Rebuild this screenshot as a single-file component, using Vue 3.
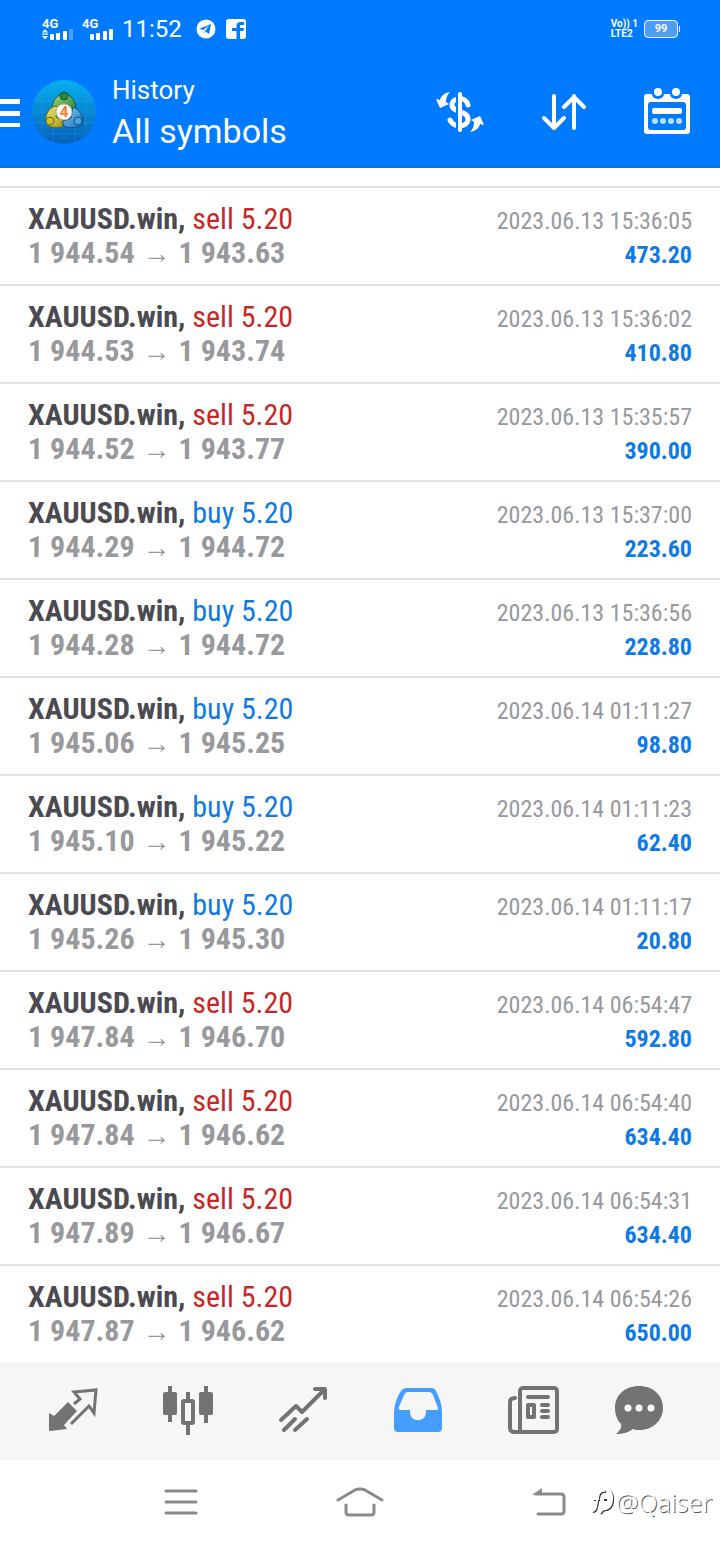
<script setup>
const deals = [
  ['sell', '1 944.54', '1 943.63', '2023.06.13 15:36:05', '473.20'],
  ['sell', '1 944.53', '1 943.74', '2023.06.13 15:36:02', '410.80'],
  ['sell', '1 944.52', '1 943.77', '2023.06.13 15:35:57', '390.00'],
  ['buy', '1 944.29', '1 944.72', '2023.06.13 15:37:00', '223.60'],
  ['buy', '1 944.28', '1 944.72', '2023.06.13 15:36:56', '228.80'],
  ['buy', '1 945.06', '1 945.25', '2023.06.14 01:11:27', '98.80'],
  ['buy', '1 945.10', '1 945.22', '2023.06.14 01:11:23', '62.40'],
  ['buy', '1 945.26', '1 945.30', '2023.06.14 01:11:17', '20.80'],
  ['sell', '1 947.84', '1 946.70', '2023.06.14 06:54:47', '592.80'],
  ['sell', '1 947.84', '1 946.62', '2023.06.14 06:54:40', '634.40'],
  ['sell', '1 947.89', '1 946.67', '2023.06.14 06:54:31', '634.40'],
  ['sell', '1 947.87', '1 946.62', '2023.06.14 06:54:26', '650.00'],
].map(([side, open, close, time, profit]) => ({ side, open, close, time, profit }))
</script>

<template>
  <div class="screen">
    <header class="top">
      <div class="status">
        <div class="signal">
          <span class="net">4G</span>
          <svg width="32" height="12" viewBox="0 0 32 12" fill="#fff">
            <path d="M0 4.500 3 1l3 3.500zM0 8l3 3.500L6 8zM0 5.500h6v1.200H0z" />
            <rect x="8" y="6" width="4" height="6" rx="1" /><rect x="14" y="5" width="4" height="7" rx="1" />
            <rect x="21" y="3" width="4" height="9" rx="1" /><rect x="27" y="1" width="4" height="11" rx="1" opacity=".3" />
          </svg>
        </div>
        <div class="signal">
          <span class="net">4G</span>
          <svg width="32" height="12" viewBox="0 0 32 12" fill="#fff">
            <rect x="8" y="6" width="4" height="6" rx="1" /><rect x="14" y="5" width="4" height="7" rx="1" />
            <rect x="21" y="3" width="4" height="9" rx="1" /><rect x="27" y="1" width="4" height="11" rx="1" />
          </svg>
        </div>
        <span class="clock">11:52</span>
        <svg class="tg" width="20" height="20" viewBox="0 0 20 20">
          <circle cx="10" cy="10" r="9.500" fill="#fff" />
          <path d="M3.500 9.800 15 5l-2 10-3.500-2.500-1.800 1.800-.6-3.200z" fill="#007aff" />
          <path d="m7.100 11 6-4.500-4 5.500-1.400 2z" fill="#fff" />
        </svg>
        <svg width="20" height="20" viewBox="0 0 20 20">
          <rect width="20" height="20" rx="3" fill="#fff" />
          <path d="M10.500 20v-8H6V9h4.500V7c0-2.600 1.500-4 4-4H18v3h-2.500C14.300 6 14 6.500 14 7.400V9h4l-.5 3H14v8z" fill="#007aff" />
        </svg>
        <div class="lte"><span>Vo)) 1</span><span>LTE2</span></div>
        <div class="battery">99</div>
      </div>
      <div class="toolbar">
        <button class="menu" aria-label="Menu">
          <svg width="20" height="30" viewBox="0 0 20 30" fill="#fff"><path d="M0 2h20v5H0zM0 14h20v5H0zM0 26h20v4H0z" /></svg>
        </button>
        <svg class="logo" width="64" height="64" viewBox="0 0 64 64">
          <defs>
            <linearGradient id="sky" x1="0" y1="0" x2="0" y2="1"><stop offset="0" stop-color="#08aef0" /><stop offset="1" stop-color="#0660b8" /></linearGradient>
            <linearGradient id="green" x1="0" y1="0" x2="1" y2="1"><stop offset="0" stop-color="#a8d878" /><stop offset="1" stop-color="#187c38" /></linearGradient>
            <linearGradient id="gold" x1="0" y1="0" x2="1" y2="1"><stop offset="0" stop-color="#f2e87c" /><stop offset="1" stop-color="#a79616" /></linearGradient>
            <linearGradient id="blue" x1="0" y1="0" x2="1" y2="1"><stop offset="0" stop-color="#8cd2f8" /><stop offset="1" stop-color="#126cb8" /></linearGradient>
          </defs>
          <circle cx="32" cy="32" r="32" fill="url(#sky)" />
          <path d="M10 10v44M21 2v60M43 2v60M54 10v44M2 21h60M0 32h64M2 43h60M10 54h44" stroke="#4cc4ff" stroke-width="1" opacity=".2" />
          <path d="M32 14c7 0 12 7 12 15l-5 4-7-8-7 8-5-4c0-8 5-15 12-15z" fill="url(#green)" stroke="#125c35" />
          <path d="M23 26c-6 2-10 9-9 15 0 6 7 7 16 6l2-6-8-4 2-10z" fill="url(#gold)" stroke="#6e6a18" />
          <path d="M41 27c7 3 10 9 10 14 0 6-9 8-18 6l-3-5 9-4z" fill="url(#blue)" stroke="#154d86" />
          <circle cx="32" cy="16" r="4" fill="#238846" stroke="#125c35" />
          <circle cx="18" cy="41" r="4" fill="#d0bd32" stroke="#6e6a18" />
          <circle cx="46" cy="41" r="4" fill="#48a3de" stroke="#154d86" />
          <circle cx="32" cy="32" r="8" fill="#fffaf4" stroke="#b5b1a6" />
          <text x="32" y="37" text-anchor="middle" class="four">4</text>
        </svg>
        <div class="titles">
          <span class="small">History</span>
          <h1>All symbols</h1>
        </div>
        <button aria-label="Currency">
          <svg width="48" height="42" viewBox="0 0 48 42" fill="none" stroke="#fff">
            <path d="M32 14C30 5 16 6 16 14s16 5 16 14-15 9-18 1" stroke-width="5" stroke-linecap="round" />
            <path d="M21 3v36" stroke="#007aff" stroke-width="2" />
            <path d="M24 3v36" stroke-width="4" stroke-linecap="round" />
            <path d="M14 1C8 2 5 5 4 9L0 8l4 9 9-4-3-2c0-4 1-7 4-10zM34 41c6-1 9-4 10-8l4 1-4-9-9 4 3 2c0 4-1 7-4 10z" fill="#fff" stroke="none" />
          </svg>
        </button>
        <button aria-label="Sort">
          <svg width="44" height="36" viewBox="0 0 44 36" fill="none" stroke="#fff" stroke-width="4" stroke-linecap="round" stroke-linejoin="round"><path d="M12 2v32M2 24l10 10 10-10M32 34V2M22 13 32 3l10 10" /></svg>
        </button>
        <button aria-label="Choose period">
          <svg width="46" height="48" viewBox="0 0 46 48">
            <rect y="6" width="46" height="40" rx="3" fill="#fff" />
            <rect x="4" y="14" width="38" height="28" rx="3" fill="#007aff" />
            <path d="M8 6h12a6 5 0 0 1-12 0zM26 6h12a6 5 0 0 1-12 0z" fill="#007aff" />
            <circle cx="14" cy="4" r="4" fill="#fff" /><circle cx="32" cy="4" r="4" fill="#fff" />
            <rect x="8" y="20" width="30" height="6" rx="2" fill="#fff" />
            <g fill="#b8deff"><circle cx="11" cy="33" r="3" /><circle cx="19" cy="33" r="3" /><circle cx="27" cy="33" r="3" /><circle cx="35" cy="33" r="3" /></g>
          </svg>
        </button>
      </div>
    </header>

    <main>
      <ul class="deals">
        <li v-for="d in deals" :key="d.time">
          <div class="line">
            <span class="deal"><b>XAUUSD.win,</b> <span :class="d.side">{{ d.side }} 5.20</span></span>
            <time>{{ d.time }}</time>
          </div>
          <div class="line">
            <span class="prices">{{ d.open }}<span class="arrow">→</span>{{ d.close }}</span>
            <span class="profit">{{ d.profit }}</span>
          </div>
        </li>
      </ul>
    </main>

    <nav class="tabs">
      <button aria-label="Quotes">
        <svg width="52" height="52" viewBox="0 0 52 52">
          <path d="m2 28 5 3 14-14 9 9-13 14 3 4-17 2q-1 0-1-1z" fill="#737373" />
          <path d="m27 19 6-5-6-7 22-2-2 23-5-7-18 18" fill="none" stroke="#737373" stroke-width="3" />
        </svg>
      </button>
      <button aria-label="Charts">
        <svg width="52" height="52" viewBox="0 0 52 52" fill="#737373">
          <path d="M6 1h4v36H6zM42 1h4v37h-4zM24 7h4v43h-4z" /><rect x="1" y="7" width="14" height="23" rx="2" /><rect x="37" y="7" width="14" height="23" rx="2" />
          <rect x="21" y="16" width="10" height="22" rx="1" fill="#f6f6f6" stroke="#737373" stroke-width="4" />
        </svg>
      </button>
      <button aria-label="Trade">
        <svg width="52" height="52" viewBox="0 0 52 52" fill="none" stroke="#737373" stroke-width="4" stroke-linecap="round" stroke-linejoin="round"><path d="m4 35 15-14 6 6L47 5M38 4h10v9M7 45l11-11M18 45l12-11" /></svg>
      </button>
      <button aria-label="History">
        <svg width="52" height="52" viewBox="0 -1 52 52">
          <path d="M15 2h24c3 0 4 1 5 3 4 8 6 14 6 22v15c0 2-1 4-4 4H6c-3 0-4-2-4-4V27C2 19 5 11 9 5c2-2 3-3 6-3z" fill="#459eff" />
          <path d="M16 6h21c2 0 3 1 4 3l5 13c0 1 0 2-2 2H34v2c0 11-16 11-16 0v-2H9c-2 0-3-1-2-3l5-12c1-2 2-3 4-3z" fill="#f6f6f6" />
        </svg>
      </button>
      <button aria-label="News">
        <svg width="52" height="52" viewBox="0 0 52 52" fill="none" stroke="#737373" stroke-width="4" stroke-linejoin="round">
          <rect x="13" y="3" width="37" height="44" rx="3" /><path d="M8 13c-3 0-5 1-5 4v26c0 3 2 4 5 4h8" stroke-linecap="round" />
          <path d="M21 12h20M35 20h6M35 26h6M35 32h6" stroke-linecap="round" /><rect x="21" y="20" width="6" height="12" />
        </svg>
      </button>
      <button aria-label="Messages">
        <svg width="50" height="52" viewBox="1 1 50 52">
          <path d="M27 2c14 0 24 9 24 22S40 46 28 46c-3 0-5 0-7-1-4 3-10 5-17 5 4-3 6-7 5-10C5 36 3 30 3 24 3 11 13 2 27 2z" fill="#737373" />
          <g fill="#fff"><circle cx="16" cy="24" r="3.500" /><circle cx="27" cy="24" r="3.500" /><circle cx="39" cy="24" r="3.500" /></g>
        </svg>
      </button>
    </nav>

    <footer class="system">
      <button aria-label="Recent apps"><svg width="34" height="26" viewBox="0 0 34 26" stroke="#8a8a8a" stroke-width="3" stroke-linecap="round"><path d="M2 2h30M2 13h30M2 24h30" /></svg></button>
      <button class="home" aria-label="Home"><svg width="48" height="30" viewBox="0 0 48 30" fill="none" stroke="#8a8a8a" stroke-width="3" stroke-linecap="round"><path d="m2 13 17-10q5-2 10 0l17 10M10 18v7q0 3 3 3h22q3 0 3-3v-7" /></svg></button>
      <button aria-label="Back"><svg width="34" height="28" viewBox="0 0 34 28"><path d="M4 6h25q3 0 3 3v14q0 3-3 3H6" fill="none" stroke="#8a8a8a" stroke-width="3" stroke-linecap="round" /><path d="M0 7 10 0v7z" fill="#8a8a8a" /></svg></button>
      <div class="mark">
        <svg width="26" height="28" viewBox="0 0 26 28" fill="none" stroke-width="2">
          <path d="M3 24c5 1 4-9 6-14 1-5 4-7 7-6M4 12h6M14 12h3M20 3c5 5 4 17-3 19-4 0-4 1-6 4" stroke="#333" />
          <path d="M2 23c5 1 4-9 6-14 1-5 4-7 7-6M3 11h6M19 2c5 5 4 17-3 19-4 0-4 1-6 4" stroke="#fff" />
        </svg>
        <span>@Qaiser</span>
      </div>
    </footer>
  </div>
</template>

<style>
body { background: #fff; }
</style>

<style scoped>
.screen { min-height: 100vh; display: flex; flex-direction: column; font-family: Roboto, "Noto Sans", sans-serif; background: #fff; }
button { border: 0; padding: 0; background: none; display: flex; cursor: pointer; }
svg { display: block; flex: none; }
.top { background: #007aff; color: #fff; border-bottom: 2px solid #0a6fdc; }
.status { display: flex; align-items: center; height: 58px; padding: 0 42px; }
.signal { display: flex; flex-direction: column; width: 40px; }
.net { font-size: 13px; line-height: 9px; font-weight: 700; }
.clock { font-size: 24px; line-height: 28px; }
.tg { margin: 0 10px 0 14px; }
.lte { margin-left: auto; display: flex; flex-direction: column; font-size: 10px; line-height: 10px; font-weight: 700; white-space: nowrap; }
.battery { box-sizing: border-box; position: relative; width: 34px; height: 18px; margin-left: 6px; border: 1px solid #fff; border-radius: 4px; background: #4c9dff; font-size: 11px; line-height: 16px; font-weight: 700; text-align: center; }
.battery::after { content: ""; position: absolute; right: -3px; top: 5px; width: 1px; height: 6px; background: #fff; }
.toolbar { display: flex; align-items: center; height: 108px; padding-right: 30px; }
.logo { margin: 0 16px 0 12px; }
.four { font-size: 15px; font-weight: 700; fill: #ee8135; }
.titles { flex: 1; padding-top: 4px; }
.small { display: block; font-size: 26px; line-height: 34px; }
h1 { margin: 0; font-size: 34px; line-height: 48px; font-weight: 400; }
.toolbar button + button { margin-left: 58px; }
main { flex: 1; padding-top: 18px; }
.deals { margin: 0; padding: 0; list-style: none; font-family: "Roboto Condensed", "Liberation Sans Narrow", Roboto, sans-serif; }
.deals li { box-sizing: border-box; border-top: 2px solid #e3e3e3; padding: 14px 28px; min-height: 98px; }
.line { display: flex; justify-content: space-between; align-items: baseline; height: 34px; line-height: 34px; white-space: nowrap; }
.deal, .prices { font-size: 30px; }
.deal b { color: #4b4a51; }
.sell { color: #c62828; }
.buy { color: #0f7ae5; }
.prices { color: #98999d; font-weight: 700; }
.arrow { margin: 0 8px; font-family: "Liberation Sans", sans-serif; font-size: 28px; line-height: 24px; font-weight: 400; }
time { font-size: 24px; color: #98999d; }
.profit { font-size: 24px; font-weight: 700; color: #0f7ae5; }
.tabs { display: grid; grid-template-columns: repeat(5, 115fr) 96fr; justify-items: center; align-items: center; height: 98px; padding: 0 34px 0 15px; background: #f6f6f6; }
.system { position: relative; display: flex; justify-content: space-between; align-items: center; height: 84px; padding: 0 154px 0 164px; }
.home { margin-right: 10px; }
.mark { position: absolute; right: 8px; top: 26px; display: flex; align-items: center; font-family: "Noto Sans", sans-serif; font-size: 25px; line-height: 32px; font-weight: 300; color: #fff; text-shadow: 1px 1px 0 #555; }
</style>
